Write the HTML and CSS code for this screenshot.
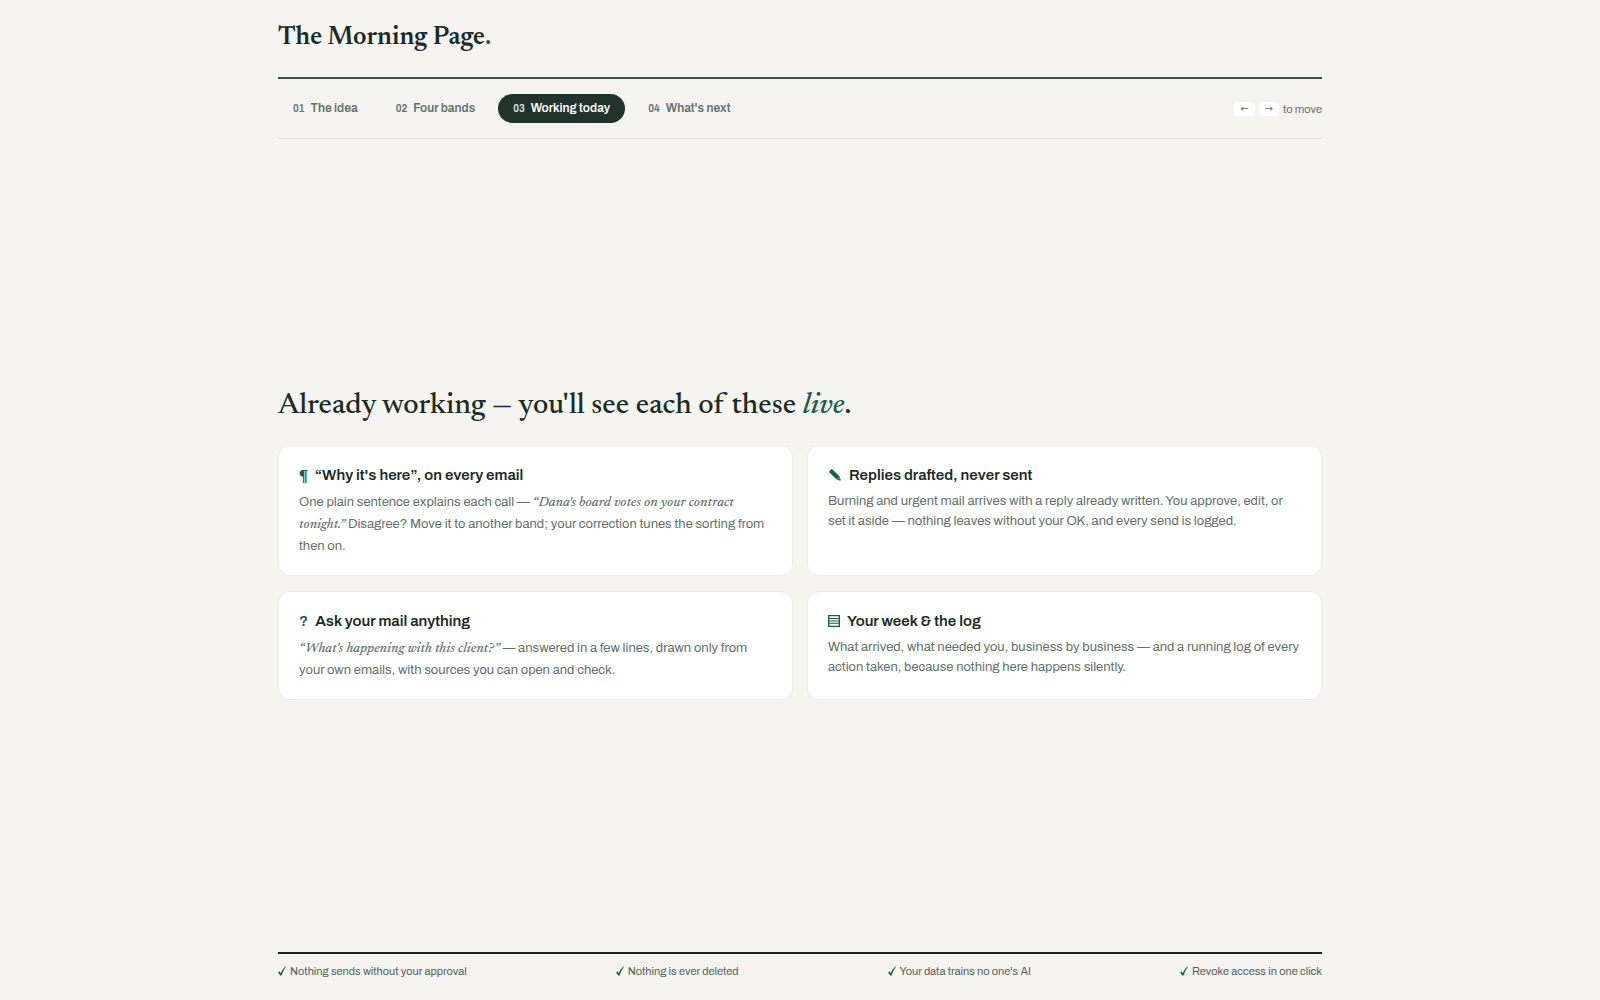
FILE: index.html
```
<!DOCTYPE html>
<html lang="en">
<head>
    <meta charset="UTF-8">
    <meta name="viewport" content="width=device-width, initial-scale=1.0">
    <title>The Morning Page</title>
    <link rel="stylesheet" href="styles.css">
</head>
<body>
    <svg class="defs" aria-hidden="true">
        <symbol id="check" viewBox="0 0 8 10">
            <path d="M0.2 6.2 L1.6 5.2 L2.8 7.2 C3.9 4.4 5.4 2.1 7.2 0.4 L7.9 0.8 C6.2 3.2 4.8 6 3.5 9.4 L2.1 9.4 Z"/>
        </symbol>
    </svg>
    <div class="page">
        <header class="masthead">
            <div class="brand">The Morning Page<span>.</span></div>
        </header>

        <nav class="tabs">
            <button type="button" class="tab"><span class="num">01</span>The idea</button>
            <button type="button" class="tab"><span class="num">02</span>Four bands</button>
            <button type="button" class="tab active" aria-current="page"><span class="num">03</span>Working today</button>
            <button type="button" class="tab"><span class="num">04</span>What's next</button>
            <div class="hint"><kbd>←</kbd><kbd>→</kbd>to move</div>
        </nav>

        <main class="slide">
            <h1>Already working — you'll see each of these <em>live</em>.</h1>
            <div class="cards">
                <section class="card quoted">
                    <h2><span class="icon">¶</span>“Why it's here”, on every email</h2>
                    <p>One plain sentence explains each call — <em>“Dana's board votes on your contract tonight.”</em> Disagree? Move it to another band; your correction tunes the sorting from then on.</p>
                </section>
                <section class="card">
                    <h2>
                        <svg class="icon" width="14" height="14" viewBox="0 0 14 14" aria-hidden="true">
                            <path d="M1.3 3.2 L3.2 1.3 Q3.9 0.9 4.5 1.4 L11.3 8 L12.8 12 L12.2 12.7 L8.3 11.2 L1.5 4.5 Q0.9 3.8 1.3 3.2 Z"/>
                            <path class="cut" d="M11.2 8.8 L9.2 10.8 L11.6 11.5 Z"/>
                        </svg>
                        Replies drafted, never sent
                    </h2>
                    <p>Burning and urgent mail arrives with a reply already written. You approve, edit, or set it aside — nothing leaves without your OK, and every send is logged.</p>
                </section>
                <section class="card quoted">
                    <h2><span class="icon">?</span>Ask your mail anything</h2>
                    <p><em>“What's happening with this client?”</em> — answered in a few lines, drawn only from your own emails, with sources you can open and check.</p>
                </section>
                <section class="card">
                    <h2>
                        <svg class="icon" width="12" height="12" viewBox="0 0 12 12" aria-hidden="true">
                            <path fill-rule="evenodd" d="M0 0 H12 V12 H0 Z M1.3 1.3 V10.7 H10.7 V1.3 Z"/>
                            <path d="M1 3 H11 V4 H1 Z M1 5.4 H11 V6.4 H1 Z M1 7.8 H11 V8.8 H1 Z"/>
                        </svg>
                        Your week &amp; the log
                    </h2>
                    <p>What arrived, what needed you, business by business — and a running log of every action taken, because nothing here happens silently.</p>
                </section>
            </div>
        </main>

        <footer>
            <ul class="promises">
                <li><svg class="check" aria-hidden="true"><use href="#check"/></svg>Nothing sends without your approval</li>
                <li><svg class="check" aria-hidden="true"><use href="#check"/></svg>Nothing is ever deleted</li>
                <li><svg class="check" aria-hidden="true"><use href="#check"/></svg>Your data trains no one's AI</li>
                <li><svg class="check" aria-hidden="true"><use href="#check"/></svg>Revoke access in one click</li>
            </ul>
        </footer>
    </div>
</body>
</html>
```
FILE: styles.css
```
:root {
    --paper: #f5f4f0;
    --ink: #1b2b25;
    --muted: #66706b;
    --green: #1b5e4b;
    --line: #e7e7e2;
    --serif: "Newsreader", "Liberation Serif", "Times New Roman", serif;
    --sans: "Archivo", "Liberation Sans", Arial, sans-serif;
}
* {
    box-sizing: border-box;
}
body {
    margin: 0;
    background-color: var(--paper);
    color: var(--ink);
    font-family: var(--sans);
}
.defs {
    display: none;
}
.page {
    max-width: 1100px;
    min-height: 100vh;
    margin: 0 auto;
    padding: 0 28px;
    display: flex;
    flex-direction: column;
}
.masthead {
    padding: 22px 0 23px;
    border-bottom: 2px solid #3f4f48;
}
.brand {
    font-family: var(--serif);
    font-size: 26px;
    font-weight: 600;
    line-height: 32px;
}
.brand span {
    color: var(--green);
}
.tabs {
    display: flex;
    align-items: center;
    gap: 8px;
    padding: 15px 0;
    border-bottom: 1px solid var(--line);
}
.tab {
    display: flex;
    align-items: baseline;
    gap: 6px;
    padding: 7px 15px;
    border: 0;
    border-radius: 15px;
    background: none;
    color: var(--muted);
    font-family: var(--sans);
    font-size: 12px;
    font-weight: 600;
    line-height: 15px;
    cursor: pointer;
}
.tab .num {
    font-size: 10px;
}
.tab.active {
    background-color: #22332c;
    color: #fff;
}
.tab.active .num {
    color: #dfe5e0;
}
.hint {
    display: flex;
    align-items: center;
    gap: 4px;
    margin-left: auto;
    color: var(--muted);
    font-size: 11px;
    line-height: 14px;
}
kbd {
    padding: 0 6px;
    border-radius: 4px;
    background-color: #fff;
    font-family: "DejaVu Sans", sans-serif;
    font-size: 10px;
    line-height: 14px;
}
.slide {
    flex: 1;
    display: flex;
    flex-direction: column;
    justify-content: center;
    padding-bottom: 4px;
}
h1 {
    margin: 0 0 21px;
    font-family: var(--serif);
    font-size: 30px;
    font-weight: 500;
    line-height: 36px;
}
h1 em {
    color: var(--green);
}
.cards {
    display: grid;
    grid-template-columns: 1fr 1fr;
    gap: 15px 14px;
}
.card {
    padding: 18px 20px;
    border: 1px solid #ebebe7;
    border-radius: 12px;
    background-color: #fff;
}
h2 {
    display: flex;
    align-items: center;
    gap: 7px;
    margin: 0 0 5px;
    font-size: 15px;
    font-weight: 600;
    line-height: 22px;
}
.icon {
    color: var(--green);
    fill: var(--green);
}
.icon .cut {
    fill: #7fa597;
}
.card p {
    margin: 0;
    color: var(--muted);
    font-size: 13px;
    line-height: 20px;
}
.card.quoted p {
    padding-right: 4px;
    line-height: 22px;
}
.card p em {
    font-family: var(--serif);
    font-size: 14px;
    font-weight: 500;
    line-height: 16px;
}
.promises {
    display: flex;
    justify-content: space-between;
    margin: 0;
    padding: 9px 0 21px;
    border-top: 2px solid #16241e;
    list-style: none;
    color: #56625c;
    font-size: 11px;
    line-height: 16px;
}
.promises li {
    display: flex;
    align-items: center;
    gap: 4px;
}
.check {
    width: 8px;
    height: 10px;
    fill: var(--green);
}
```
